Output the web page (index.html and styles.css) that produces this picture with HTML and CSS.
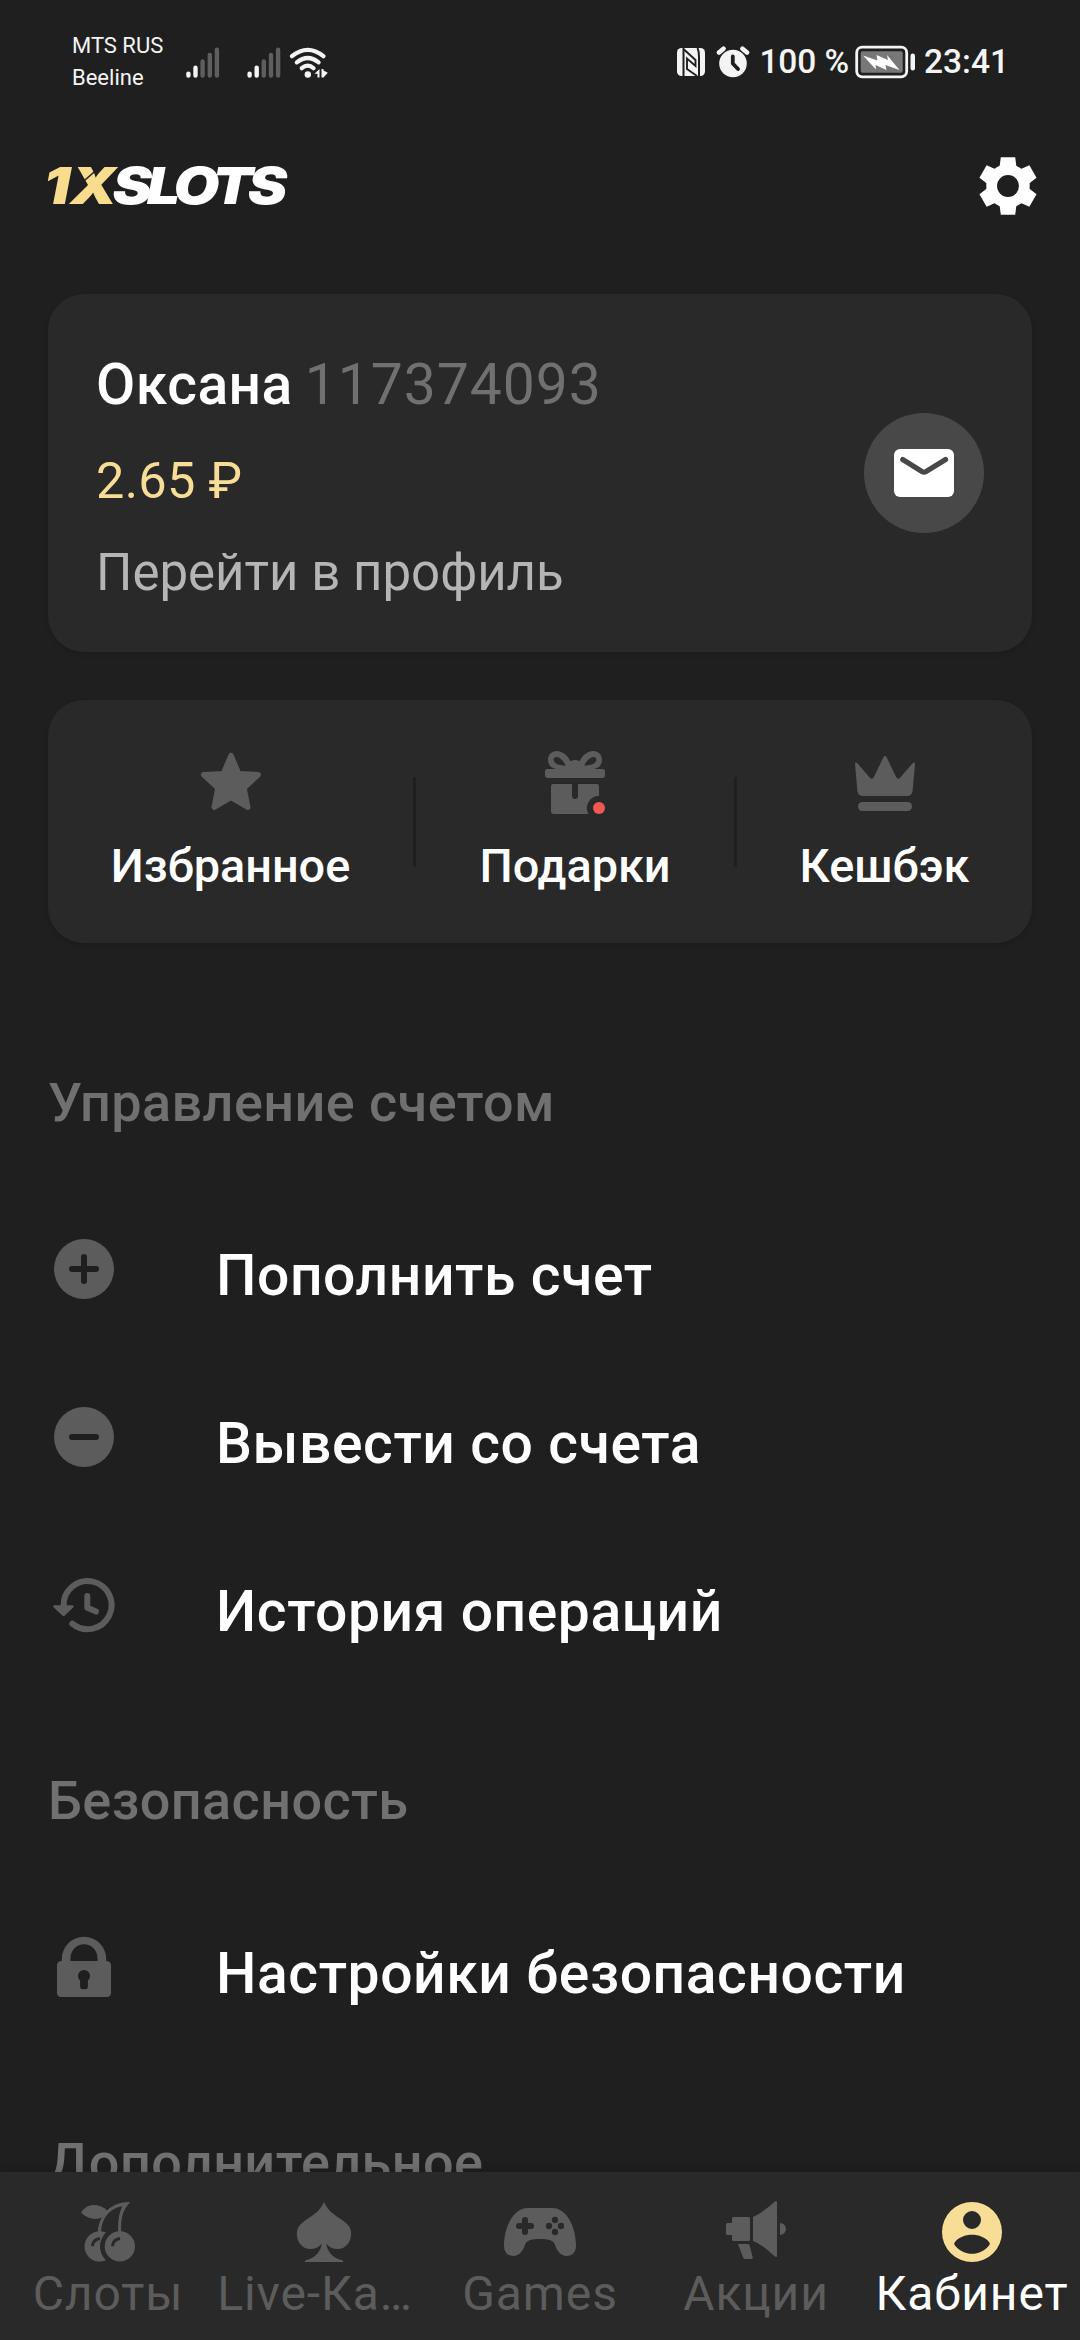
FILE: index.html
```html
<!DOCTYPE html>
<html lang="ru">
<head>
<meta charset="utf-8">
<title>1XSLOTS</title>
<link rel="stylesheet" href="styles.css">
</head>
<body>
<div class="screen">
  <header class="status">
    <div class="carriers"><span>MTS RUS</span><span>Beeline</span></div>
    <svg class="signals" width="146" height="36" viewBox="0 0 146 36" aria-hidden="true">
      <g id="bars" stroke-width="4.4" stroke-linecap="round" fill="none">
        <path stroke="#f4f4f4" d="M5.4 29.6V31.5M12.5 23.7V31.5"/>
        <path stroke="#5e5e5e" d="M19.6 17.4V31.5M26.8 11V31.5M33.9 5.8V31.5"/>
      </g>
      <use href="#bars" x="61.2"/>
      <g fill="none" stroke="#f4f4f4" stroke-width="4.2" stroke-linecap="round">
        <path d="M109 12.2Q124.8-.4 140.4 12.2"/>
        <path d="M113.800 18.400Q124.800 9.600 135.600 18.400"/>
        <path d="M118.700 24.200Q124.800 19 130.600 24.200"/>
      </g>
      <circle cx="124.800" cy="30.500" r="3.200" fill="#f4f4f4"/>
      <path fill="#f4f4f4" d="M131.500 29.800L136.500 25V33.500H134.500V29.800ZM138.500 25H140.500V26.500L144.800 28.700 140.500 33.500H138.500Z"/>
    </svg>
    <div class="spacer"></div>
    <svg class="nfc" width="28" height="28" viewBox="0 0 28 28" aria-hidden="true">
      <rect width="28" height="28" rx="4.500" fill="#f4f4f4"/>
      <path d="M6.500 0V28" stroke="#1f1f1f" stroke-width="2"/>
      <path d="M20.500 0Q22 3 22 9V28" stroke="#1f1f1f" stroke-width="2" fill="none"/>
      <path d="M7 1.500L18.500 12V18L10 10.500V21L20 28" stroke="#1f1f1f" stroke-width="1.900" fill="none"/>
    </svg>
    <svg class="alarm" width="34" height="32" viewBox="0 0 34 32" aria-hidden="true">
      <circle cx="17" cy="17.500" r="13.800" fill="#f4f4f4"/>
      <path d="M3 6.500L7.500 2.700M31 6.500L26.500 2.700" stroke="#f4f4f4" stroke-width="4.600" stroke-linecap="round"/>
      <path d="M16.800 10.500V17.500L22 23" stroke="#1f1f1f" stroke-width="3.800" fill="none" stroke-linecap="round" stroke-linejoin="round"/>
    </svg>
    <span class="percent">100 %</span>
    <svg class="battery" width="62" height="34" viewBox="0 0 62 34" aria-hidden="true">
      <rect x="1.700" y="2.200" width="50" height="29.600" rx="5.500" fill="none" stroke="#f4f4f4" stroke-width="2.800"/>
      <rect x="5.700" y="6.200" width="42" height="21.600" rx="2" fill="#787878"/>
      <path fill="#fff" d="M8 10.500L22.500 15.500 21.500 10 33 15 32 10 44.500 25 30.500 20 31.500 25 20.500 20 21 24.500Z"/>
      <rect x="55.500" y="8.500" width="4.500" height="17" rx="2.200" fill="#f4f4f4"/>
    </svg>
    <span class="clock">23:41</span>
  </header>

  <div class="topbar">
    <svg class="logo" width="256" height="72" viewBox="-4 -16 256 72" role="img" aria-label="1XSLOTS">
      <text class="logo-text" transform="scale(1.160 1)" x="-3" y="37.600"><tspan class="gold">1X</tspan><tspan class="white" x="56.500">SLOTS</tspan></text>
      <path d="M34 17.500L54 0" stroke="#1f1f1f" stroke-width="1.500"/>
    </svg>
    <svg class="icon gear" viewBox="-12 -12 24 24" aria-label="Настройки">
      <defs><path id="tooth" d="M-2.400-9.600H2.400L2.800-6.400H-2.800Z"/></defs>
      <circle r="5.450" fill="none" stroke="#fff" stroke-width="3.600"/>
      <g fill="#fff">
        <use href="#tooth"/><use href="#tooth" transform="rotate(60)"/><use href="#tooth" transform="rotate(120)"/>
        <use href="#tooth" transform="rotate(180)"/><use href="#tooth" transform="rotate(240)"/><use href="#tooth" transform="rotate(300)"/>
      </g>
    </svg>
  </div>

  <main class="content">
    <section class="card profile">
      <div class="profile-text">
        <div class="name"><b>Оксана</b><span>117374093</span></div>
        <div class="balance">2.65 ₽</div>
        <div class="link">Перейти в профиль</div>
      </div>
      <div class="mail">
        <svg class="icon" viewBox="0 0 24 24">
          <rect x="2" y="4" width="20" height="16" rx="2" fill="#fff"/>
          <path d="M4.900 7.500L11.300 11.500Q12 11.900 12.700 11.500L19.200 7.500" fill="none" stroke="#484848" stroke-width="1.700" stroke-linecap="round"/>
        </svg>
      </div>
    </section>

    <section class="card shortcuts">
      <div class="shortcut">
        <svg class="icon gray" viewBox="0 0 24 24"><path stroke="#5c5c5c" stroke-width="1.800" stroke-linejoin="round" d="M12 3.500L14.550 9.550 21.100 9.900 16.350 14.300 17.600 20.750 12 17.450 6.400 20.750 7.650 14.300 2.900 9.900 9.450 9.550Z"/></svg>
        <span>Избранное</span>
      </div>
      <div class="divider"></div>
      <div class="shortcut">
        <svg class="icon gray" viewBox="0 0 24 24">
          <path fill-rule="evenodd" d="M5.800 8C4 7.700 3 6.600 3 4.900C3 3.200 4.200 2 5.900 2C8 2 9.700 3.800 10.500 5.400C11.400 4.900 12.600 4.900 13.500 5.400C14.300 3.800 16 2 18.100 2C19.800 2 21 3.200 21 4.900C21 6.600 20 7.700 18.200 8H21.200Q22 8 22 8.800V10.200Q22 11 21.200 11H2.800Q2 11 2 10.200V8.800Q2 8 2.800 8ZM8.900 6.900C8.200 5.200 6.900 4 5.700 4C5.200 4 4.900 4.400 4.900 4.900C4.900 6.200 6.700 6.800 8.900 6.900ZM15.100 6.900C15.800 5.200 17.100 4 18.300 4C18.800 4 19.100 4.400 19.100 4.900C19.100 6.200 17.300 6.800 15.100 6.900Z"/>
          <path d="M4.800 13H11V17A1 1 0 0 0 13 17V13H19.200Q20 13 20 13.800V17A4 4 0 0 0 16.500 23H4.800Q4 23 4 22.200V13.800Q4 13 4.800 13Z"/>
          <circle cx="20" cy="21" r="2" fill="#ee5a52"/>
        </svg>
        <span>Подарки</span>
      </div>
      <div class="divider"></div>
      <div class="shortcut">
        <svg class="icon gray" viewBox="0 0 24 24">
          <path d="M2 6.300Q2.100 5.500 2.800 6.100L6.900 10.800Q7.700 11.700 8.300 10.700L11.500 4Q12 3.300 12.500 4L15.700 10.700Q16.300 11.700 17.100 10.800L21.200 6.100Q21.900 5.500 22 6.300L21.200 15.300Q21 17 19.300 17H4.700Q3 17 2.800 15.300Z"/>
          <rect x="3" y="19" width="18" height="3" rx="1.500"/>
        </svg>
        <span>Кешбэк</span>
      </div>
    </section>

    <h2>Управление счетом</h2>
    <ul>
      <li>
        <svg class="icon gray" viewBox="0 0 24 24"><circle cx="12" cy="12" r="10"/><path class="cut" d="M8 12H16M12 8V16"/></svg>
        <span>Пополнить счет</span>
      </li>
      <li>
        <svg class="icon gray" viewBox="0 0 24 24"><circle cx="12" cy="12" r="10"/><path class="cut" d="M8 12H16"/></svg>
        <span>Вывести со счета</span>
      </li>
      <li>
        <svg class="icon gray" viewBox="0 0 24 24">
          <path class="line" d="M5.200 12.200A8 8 0 1 1 8.100 18.200M13.100 9V12.900L16 14.200"/>
          <path d="M2.100 12.100H8.200Q8.800 12.200 8.400 12.800L5.600 15.500Q5.200 15.900 4.800 15.500L1.900 12.800Q1.500 12.200 2.100 12.100Z"/>
        </svg>
        <span>История операций</span>
      </li>
    </ul>

    <h2>Безопасность</h2>
    <ul>
      <li>
        <svg class="icon gray" viewBox="0 0 24 24">
          <path fill-rule="evenodd" d="M4.600 10V9.300A7.400 7.400 0 0 1 19.400 9.300V10Q21 10 21 11.500V20.500Q21 22 19.500 22H4.500Q3 22 3 20.500V11.500Q3 10 4.600 10ZM7.500 10H16.500V9.100A4.500 4.700 0 0 0 7.500 9.100ZM10.700 16.500V18.600Q10.700 19.400 11.400 19.400H12.600Q13.300 19.400 13.300 18.600V16.500A2 2 0 1 0 10.700 16.500Z"/>
        </svg>
        <span>Настройки безопасности</span>
      </li>
    </ul>

    <h2>Дополнительное</h2>
  </main>

  <nav class="tabs">
    <div class="tab">
      <svg class="icon gray" viewBox="0 0 24 24">
        <path d="M3 5.500C5 2.400 9 2.200 11.900 5L10 7.200C7.500 8.200 5 7.500 3 5.500Z"/>
        <path fill-rule="evenodd" d="M8.600 12C8.900 6.500 13 1.700 19.400 2C16.800 4.800 16.200 7.500 16.400 12H15.400C15.300 8 15.700 5.500 16.800 3.400C12.500 4 9.800 7.700 9.700 12Z"/>
        <path d="M11.300 21.400A5.050 5.050 0 1 1 11.300 12.200A6.400 6.400 0 0 0 11.300 21.400Z"/>
        <circle cx="15.950" cy="16.800" r="5.050"/>
        <path d="M6.800 16.700Q7 14.500 9.300 14.200M13.500 16.700Q13.700 14.500 16 14.200" fill="none" stroke="#292929"/>
      </svg>
      <span>Слоты</span>
    </div>
    <div class="tab live">
      <svg class="icon gray" viewBox="0 0 24 24"><path d="M12 2C10.500 5.500 8 6.500 5.500 8.300C3.700 9.600 2.950 10.800 2.950 12.600C2.950 15.600 5 17.700 7.400 17.700C9 17.700 10.300 17 11.200 15.800C11 18.500 9 20.700 5.900 21.400Q5.500 21.600 5.600 22H18.400Q18.500 21.600 18.100 21.400C15 20.700 13 18.500 12.800 15.800C13.700 17 15 17.700 16.600 17.700C19 17.700 21.050 15.600 21.050 12.600C21.050 10.800 20.300 9.600 18.500 8.300C16 6.500 13.500 5.500 12 2Z"/></svg>
      <span>Live-Ка…</span>
    </div>
    <div class="tab">
      <svg class="icon gray" viewBox="0 0 24 24">
        <path d="M8 4H16C21 4 24 10.500 24 16.500C24 18.800 22.800 20 20.900 20C18.800 20 17.600 18 17 16.300C16.500 14.700 15 14.300 12 14.300C9 14.300 7.500 14.700 7 16.300C6.400 18 5.200 20 3.100 20C1.200 20 0 18.800 0 16.500C0 10.500 3 4 8 4Z"/>
        <path d="M5 10H9M7 8V12" stroke="#292929" stroke-width="2" stroke-linecap="round"/>
        <g fill="#292929"><circle cx="17" cy="8" r="1.050"/><circle cx="17" cy="12" r="1.050"/><circle cx="15" cy="10" r="1.050"/><circle cx="19" cy="10" r="1.050"/></g>
      </svg>
      <span>Games</span>
    </div>
    <div class="tab">
      <svg class="icon gray" viewBox="0 0 24 24">
        <path d="M4 9V7.500Q4 7 4.500 7H9.500Q10 7 10 7.500V14.500Q10 15 9.500 15H4.500Q4 15 4 14.500V13H2.500Q2 13 2 12.500V9.500Q2 9 2.500 9ZM11 7Q14 5.700 18.300 1.800Q19 1.400 19 2.200V19.800Q19 20.600 18.300 20.200Q14 16 11 15ZM20 9A2 2 0 0 1 20 13ZM6 16H9.300Q9.800 16 9.900 16.500L10.900 20.500Q11 21 10.500 21H8.400Q7.900 21 7.700 20.500Z"/>
      </svg>
      <span>Акции</span>
    </div>
    <div class="tab active">
      <svg class="icon" viewBox="0 0 24 24"><path fill="#f7dd96" fill-rule="evenodd" d="M12 2A10 10 0 1 1 12 22A10 10 0 1 1 12 2ZM12 5A3 3 0 1 0 12 11A3 3 0 1 0 12 5ZM6.200 15.500Q5.900 15.900 6.200 16.300C9 20.200 15 20.200 17.800 16.300Q18.100 15.900 17.800 15.500C15.200 12.100 8.800 12.100 6.200 15.500Z"/></svg>
      <span>Кабинет</span>
    </div>
  </nav>
</div>
</body>
</html>
```
FILE: styles.css
```css
* { box-sizing: border-box; margin: 0; padding: 0; }

body {
  width: 1080px;
  height: 2340px;
  overflow: hidden;
  background: #1f1f1f;
  font-family: Roboto, "Noto Sans", sans-serif;
  color: #fff;
}

svg { display: block; flex: none; }

.screen { display: flex; flex-direction: column; height: 2340px; }
.icon { width: 72px; height: 72px; }
.gray { fill: #5c5c5c; }
.spacer { flex: 1; }

/* Status bar */
.status {
  display: flex;
  align-items: center;
  height: 124px;
  padding: 0 71px 0 72px;
  color: #f4f4f4;
  flex: none;
}
.carriers {
  display: flex;
  flex-direction: column;
  width: 111px;
  font-size: 22px;
  line-height: 32px;
}
.nfc { margin-right: 11px; }
.alarm { margin-right: 9px; }
.percent, .clock { font-size: 33.500px; font-weight: 500; line-height: 40px; white-space: nowrap; }
.percent { margin-right: 6px; letter-spacing: -0.1px; }
.battery { margin-right: 7px; }

/* Logo and settings */
.topbar {
  display: flex;
  align-items: center;
  justify-content: space-between;
  height: 124px;
  padding: 0 36px 0 43px;
  flex: none;
}
.logo-text { font-family: Inter, sans-serif; font-weight: 900; font-style: italic; font-size: 51px; }
.gold { fill: #f9dd8f; }
.white { fill: #fff; letter-spacing: -4.400px; }

/* Scrollable content */
.content { flex: 1; min-height: 0; overflow: hidden; padding: 46px 48px 0; }
.card { background: #292929; border-radius: 36px; box-shadow: 0 2px 5px rgba(0, 0, 0, 0.120); }

.profile {
  display: flex;
  align-items: center;
  justify-content: space-between;
  height: 358px;
  padding: 8px 48px 0;
}
.profile-text { display: flex; flex-direction: column; gap: 32px; white-space: nowrap; }
.name { display: flex; gap: 12px; margin-bottom: 1px; font-size: 57px; line-height: 66px; }
.name b { font-weight: 500; letter-spacing: 0.450px; }
.name span { color: #707070; letter-spacing: 0.950px; }
.balance, .link { font-size: 51px; line-height: 60px; }
.balance { color: #f7dd96; font-size: 50.500px; letter-spacing: 0.300px; }
.link { color: #b5b5b5; }
.mail {
  display: grid;
  place-items: center;
  width: 120px;
  height: 120px;
  margin-top: -8px;
  border-radius: 50%;
  background: #484848;
}

.shortcuts {
  display: grid;
  grid-template-columns: 365px 3px 318px 3px 295px;
  height: 243px;
  margin-top: 48px;
}
.shortcut {
  display: flex;
  flex-direction: column;
  align-items: center;
  gap: 21px;
  padding-top: 45px;
  font-size: 46.800px;
  font-weight: 500;
  line-height: 56px;
}
.divider { height: 90px; margin-top: 77px; background: #1f1f1f; }

h2 {
  margin: 128px 0 50px;
  font-size: 54px;
  font-weight: 500;
  line-height: 64px;
  letter-spacing: 0.420px;
  color: #707070;
}
ul { list-style: none; }
ul + h2 { margin-top: 80px; }
li { display: flex; align-items: center; gap: 96px; height: 168px; }
li span {
  padding-top: 13px;
  font-size: 57px;
  font-weight: 500;
  line-height: 67px;
  letter-spacing: 0.580px;
  white-space: nowrap;
}
.cut { fill: none; stroke: #1f1f1f; stroke-width: 2; stroke-linecap: round; }
.line { fill: none; stroke: #5c5c5c; stroke-width: 2; stroke-linecap: round; stroke-linejoin: round; }

/* Bottom navigation */
.tabs {
  display: grid;
  grid-template-columns: repeat(5, 216px);
  height: 168px;
  flex: none;
  background: #292929;
  box-shadow: 0 -2px 8px rgba(0, 0, 0, 0.150);
}
.tab {
  display: flex;
  flex-direction: column;
  align-items: center;
  padding-top: 24px;
  font-size: 48px;
  line-height: 52px;
  letter-spacing: 0.900px;
  color: #5c5c5c;
}
.live span { padding-right: 18px; }
.active { color: #fff; }
```
